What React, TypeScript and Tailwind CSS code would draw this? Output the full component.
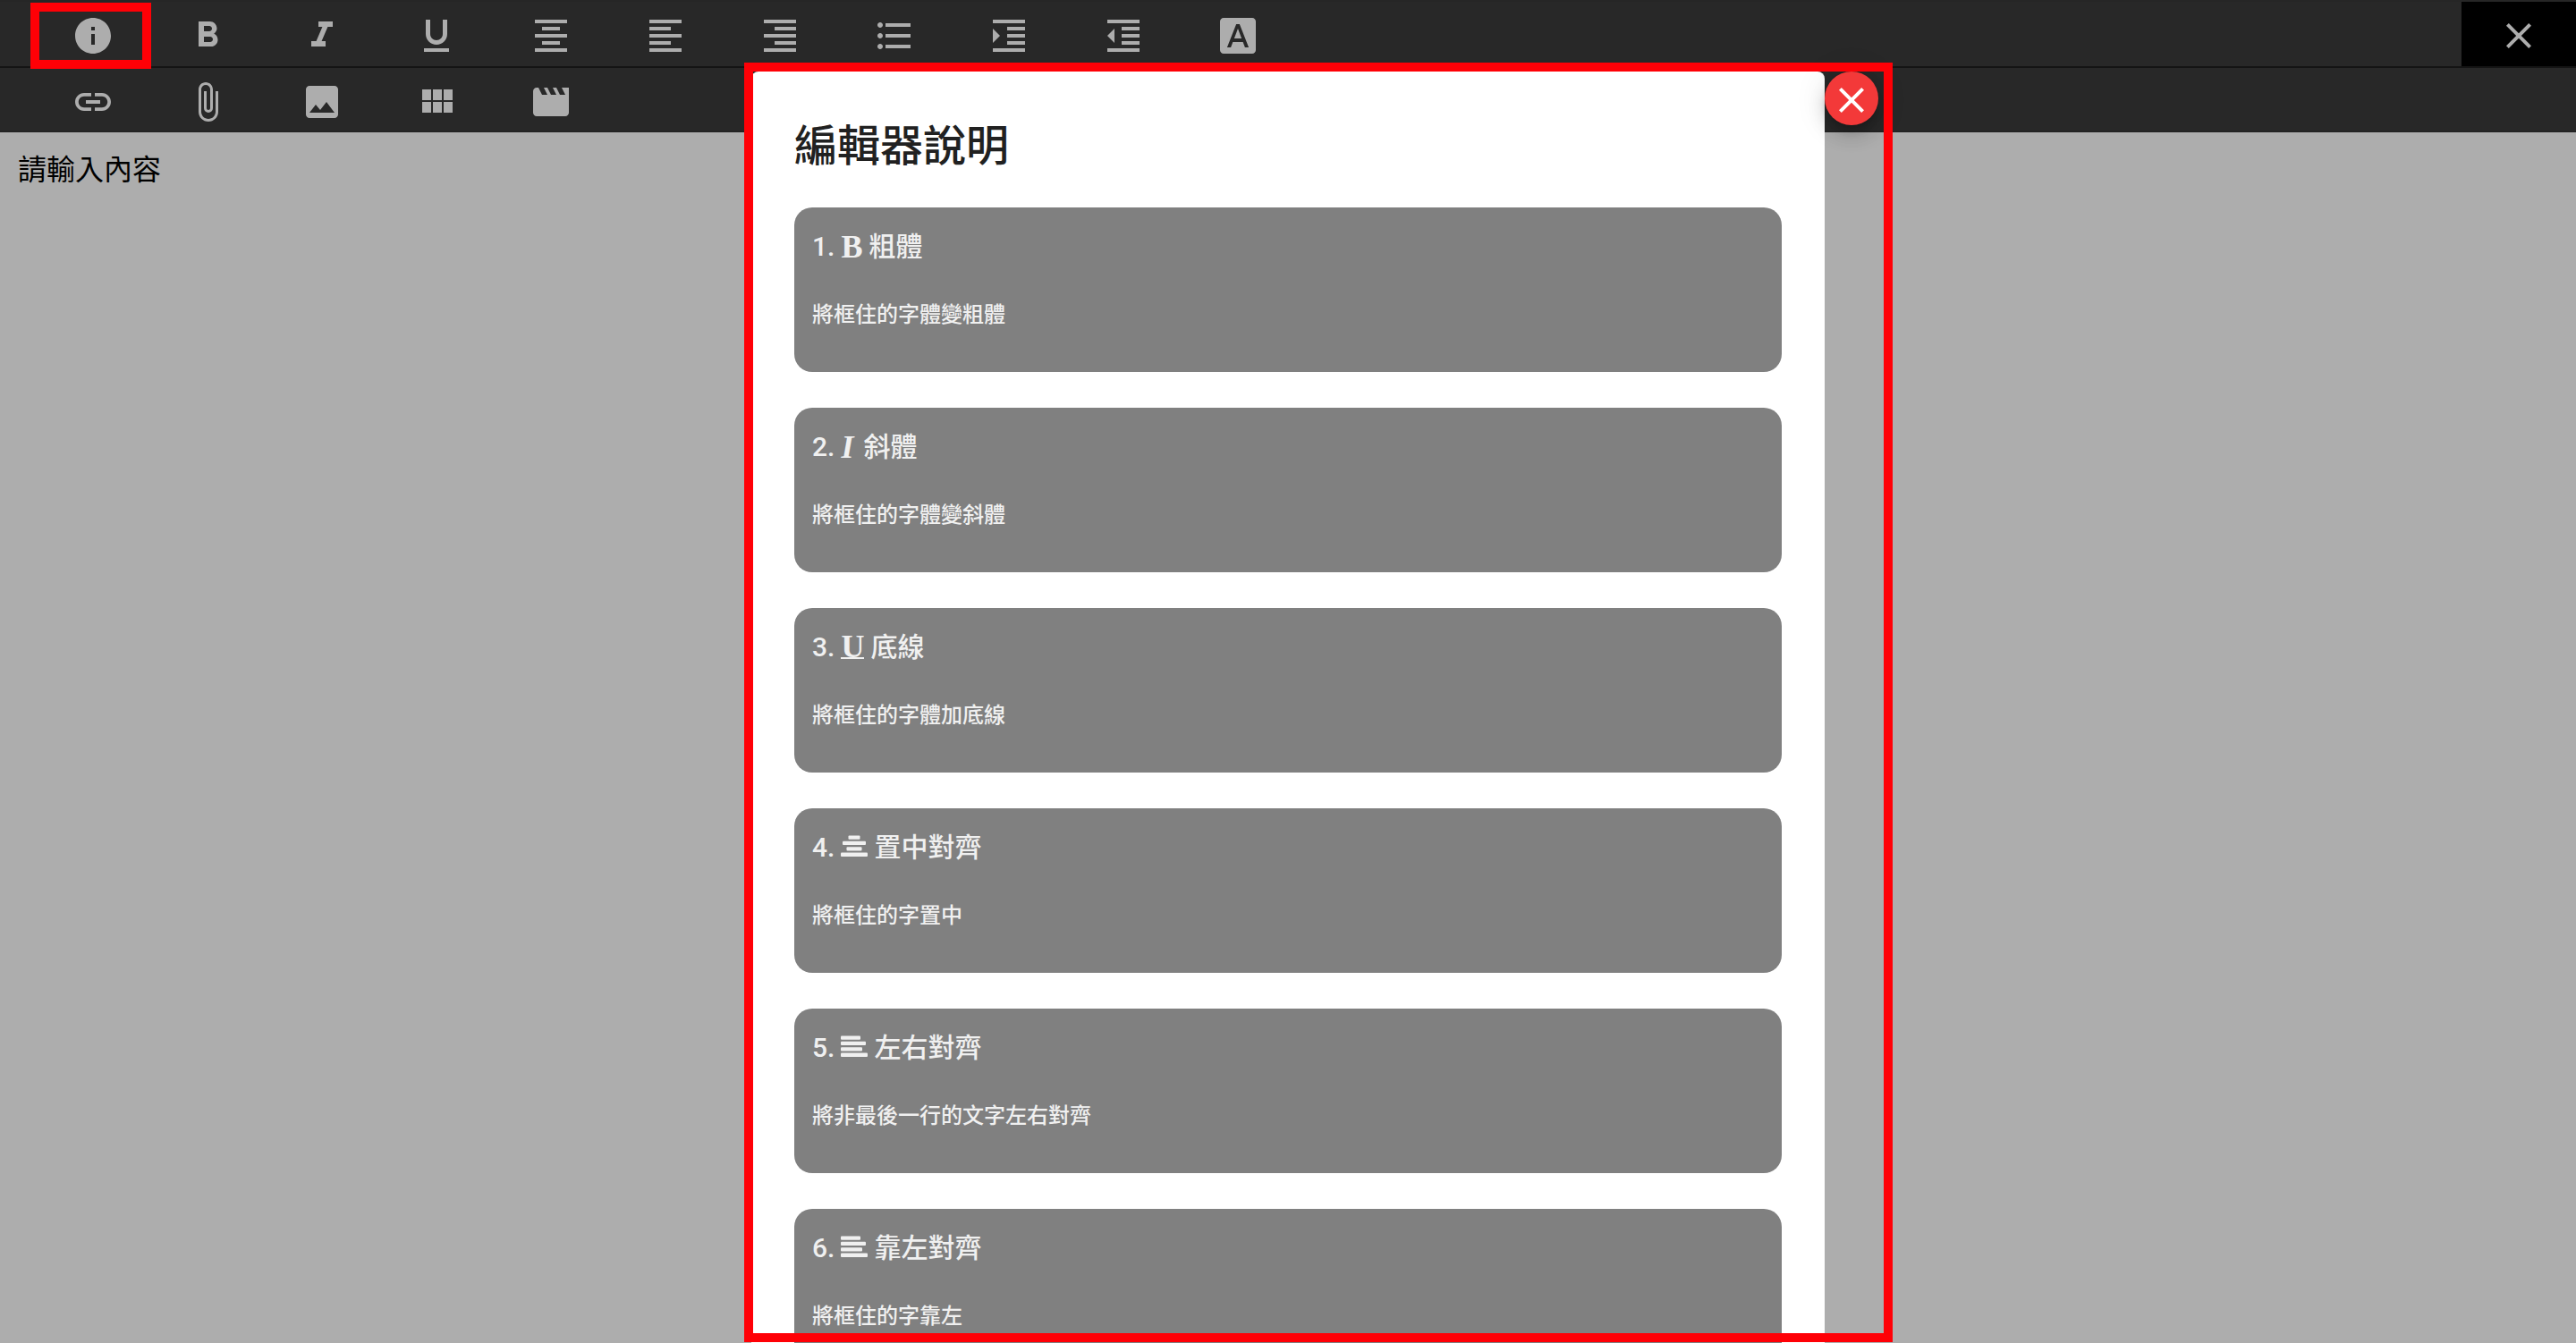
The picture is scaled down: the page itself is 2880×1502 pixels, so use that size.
import React from "react";
import {
  MdAttachFile,
  MdClose,
  MdFontDownload,
  MdFormatAlignCenter,
  MdFormatAlignLeft,
  MdFormatAlignRight,
  MdFormatBold,
  MdFormatIndentDecrease,
  MdFormatIndentIncrease,
  MdFormatItalic,
  MdFormatListBulleted,
  MdFormatUnderlined,
  MdImage,
  MdInfo,
  MdLink,
  MdMovie,
} from "react-icons/md";

type IconType = React.ComponentType<{ className?: string }>;
type Tool = { label: string; Icon: IconType; marked?: boolean };

function GridIcon({ className }: { className?: string }) {
  return (
    <svg viewBox="0 0 24 24" fill="currentColor" className={className} aria-hidden="true">
      <path d="M4 11h5V5H4v6zm0 7h5v-6H4v6zm6 0h5v-6h-5v6zm6 0h5v-6h-5v6zm-6-7h5V5h-5v6zm6-6v6h5V5h-5z" />
    </svg>
  );
}

const firstRow: Tool[] = [
  { label: "編輯器說明", Icon: MdInfo, marked: true },
  { label: "粗體", Icon: MdFormatBold },
  { label: "斜體", Icon: MdFormatItalic },
  { label: "底線", Icon: MdFormatUnderlined },
  { label: "置中對齊", Icon: MdFormatAlignCenter },
  { label: "靠左對齊", Icon: MdFormatAlignLeft },
  { label: "靠右對齊", Icon: MdFormatAlignRight },
  { label: "項目清單", Icon: MdFormatListBulleted },
  { label: "增加縮排", Icon: MdFormatIndentIncrease },
  { label: "減少縮排", Icon: MdFormatIndentDecrease },
  { label: "文字樣式", Icon: MdFontDownload },
];

const secondRow: Tool[] = [
  { label: "連結", Icon: MdLink },
  { label: "附件", Icon: MdAttachFile },
  { label: "圖片", Icon: MdImage },
  { label: "表格", Icon: GridIcon },
  { label: "影片", Icon: MdMovie },
];

function ToolButton({ label, Icon, marked }: Tool) {
  return (
    <button type="button" aria-label={label} className="relative flex h-full w-32 items-center justify-center pt-1">
      <Icon className="size-12" />
      {marked && <span className="pointer-events-none absolute -left-1.5 top-px h-[74px] w-[135px] border-10 border-[#ff0006]" />}
    </button>
  );
}

/* Four stacked bars, centred or flush left. */
function BarsIcon({ centered }: { centered?: boolean }) {
  const widths = centered ? [13, 26, 17, 30] : [22, 28, 24, 30];
  return (
    <svg viewBox="0 0 30 30" fill="currentColor" className="size-[30px]" aria-hidden="true">
      {widths.map((w, i) => (
        <rect key={i} x={centered ? (30 - w) / 2 : 0} y={1.4 + i * 6.4} width={w} height={4.3} rx={1} />
      ))}
    </svg>
  );
}

const items: { title: string; icon: React.ReactNode; text: string }[] = [
  {
    title: "粗體",
    icon: <b className="font-['Liberation_Serif'] text-[36px] leading-none font-bold">B</b>,
    text: "將框住的字體變粗體",
  },
  {
    title: "斜體",
    icon: <i className="pr-1 font-['Liberation_Serif'] text-[36px] leading-none font-bold">I</i>,
    text: "將框住的字體變斜體",
  },
  {
    title: "底線",
    icon: <span className="border-b-2 font-['Liberation_Serif'] text-[36px] leading-6 font-bold">U</span>,
    text: "將框住的字體加底線",
  },
  { title: "置中對齊", icon: <BarsIcon centered />, text: "將框住的字置中" },
  { title: "左右對齊", icon: <BarsIcon />, text: "將非最後一行的文字左右對齊" },
  { title: "靠左對齊", icon: <BarsIcon />, text: "將框住的字靠左" },
];

export default function App() {
  return (
    <div className="relative flex h-screen flex-col overflow-hidden bg-[#adadad] font-[Roboto,'Noto_Sans_CJK_TC',sans-serif]">
      <header className="border-t-2 border-[#262626] bg-[#282828] text-[#adadad]">
        <div className="flex h-[74px] justify-between border-b-2 border-[#141414]">
          <div className="flex pl-10">
            {firstRow.map((t) => (
              <ToolButton key={t.label} {...t} />
            ))}
          </div>
          <button type="button" aria-label="關閉" className="flex w-32 items-center justify-center bg-black pt-1">
            <MdClose className="size-12" />
          </button>
        </div>
        <div className="flex h-[72px] pl-10 shadow-[inset_0_-2px_0_#232323]">
          {secondRow.map((t) => (
            <ToolButton key={t.label} {...t} />
          ))}
        </div>
      </header>

      <textarea
        aria-label="內容"
        defaultValue="請輸入內容"
        className="w-full flex-1 resize-none bg-transparent px-5 py-[18px] text-[32px] leading-[48px] text-black outline-none"
      />

      <div className="absolute inset-x-0 top-20 bottom-0 flex justify-center">
        <section role="dialog" aria-labelledby="help-title" className="relative w-full max-w-[1200px]">
          <div className="h-full overflow-hidden rounded-t-lg bg-white px-12 pt-13">
            <h2 id="help-title" className="mb-9 text-[48px] leading-[64px] font-medium text-[#212121]">
              編輯器說明
            </h2>
            <div className="flex flex-col gap-10">
              {items.map((item, i) => (
                <article key={item.title} className="h-46 shrink-0 rounded-[20px] bg-[#808080] px-5 pt-5 text-[#f0f0f0]">
                  <h3 className="flex h-12 items-center gap-[7px] text-[30px] leading-none font-medium">
                    <span>{i + 1}.</span>
                    {item.icon}
                    <span>{item.title}</span>
                  </h3>
                  <p className="mt-8 text-[24px] leading-10 font-medium">{item.text}</p>
                </article>
              ))}
            </div>
          </div>
          <button
            type="button"
            aria-label="關閉說明"
            className="absolute top-0 left-full flex size-15 items-center justify-center rounded-full bg-[#f33939] pt-1 text-white shadow-[0_6px_10px_-2px_rgba(0,0,0,0.2),0_12px_20px_rgba(0,0,0,0.14),0_2px_36px_rgba(0,0,0,0.12)]"
          >
            <MdClose className="size-12" />
          </button>
          <div className="pointer-events-none absolute -top-2.5 -right-19 bottom-px -left-2 border-10 border-[#ff0006]" />
        </section>
      </div>
    </div>
  );
}
